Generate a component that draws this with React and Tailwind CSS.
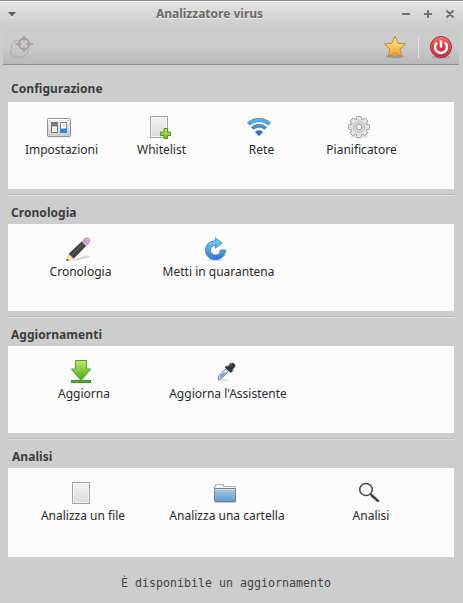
import clsx from 'clsx'

function HuntIcon() {
  return (
    <svg width="24" height="24" viewBox="0 0 24 24" fill="none" stroke="#a9a2a2" strokeWidth=".8">
      <path d="M10 5.500C6 5 3 7.500 2.500 11c-.4 2.500.4 5-.5 6.500L.5 17l2.500 3c1 1.800 2 2.500 4 2.200l8-1.200c3-1.500 4.500-4 4.300-7" />
      <path d="M4 23.500h15" stroke="#b9b6b6" />
      <circle cx="15" cy="9" r="5.300" strokeWidth="1.700" stroke="#a29a9a" />
      <path d="M15 .5v6M15 11.500v6M6.500 9H13M17 9h7" strokeWidth="1.300" stroke="#a29a9a" />
    </svg>
  )
}

function StarIcon() {
  return (
    <svg width="24" height="24" viewBox="0 0 24 24">
      <defs>
        <linearGradient id="star" x1="0" y1="0" x2="0" y2="1">
          <stop offset="0" stopColor="#fff0a8" />
          <stop offset="0.5" stopColor="#fdc95a" />
          <stop offset="1" stopColor="#ff9a1c" />
        </linearGradient>
      </defs>
      <ellipse cx="12" cy="21.500" rx="9" ry="1.800" fill="#000" opacity="0.18" />
      <path
        d="M12 1.300l3.100 6.900 7.400.8-5.500 5.100 1.700 7.400L12 18l-6.700 3.500L7 14.100 1.500 9l7.400-.8z"
        fill="url(#star)"
        stroke="#c48730"
        strokeLinejoin="round"
      />
    </svg>
  )
}

function PowerIcon() {
  return (
    <svg width="24" height="24" viewBox="0 0 24 24">
      <defs>
        <linearGradient id="power" x1="0" y1="0" x2="0" y2="1">
          <stop offset="0" stopColor="#ee756a" />
          <stop offset="0.45" stopColor="#d93a42" />
          <stop offset="1" stopColor="#b3203c" />
        </linearGradient>
      </defs>
      <ellipse cx="12" cy="22" rx="9" ry="1.800" fill="#000" opacity="0.15" />
      <circle cx="12" cy="12" r="10.500" fill="url(#power)" stroke="#a52239" />
      <circle cx="12" cy="12" r="9.500" fill="none" stroke="#f58a83" opacity="0.4" />
      <path
        d="M8 7.600a6 6 0 1 0 8 0M12 5.500v7"
        fill="none"
        stroke="#fff"
        strokeWidth="2.500"
      />
    </svg>
  )
}

function SettingsIcon() {
  return (
    <svg width="24" height="24" viewBox="0 0 24 24">
      <defs>
        <linearGradient id="plate" x1="0" y1="0" x2="0" y2="1">
          <stop offset="0" stopColor="#f2f2f2" />
          <stop offset="1" stopColor="#cfcfcf" />
        </linearGradient>
      </defs>
      <rect x="1" y="21" width="22" height="1.500" fill="#000" opacity="0.13" />
      <rect x=".5" y="3.500" width="23" height="18" rx="1" fill="url(#plate)" stroke="#929292" />
      <path d="M1.500 4.500h21" stroke="#fff" />
      <path d="M2 5.500h1M21 5.500h1M2 19.500h1M21 19.500h1" stroke="#aaa" />
      <rect x="4.500" y="7.500" width="6" height="10" fill="#fff" stroke="#777" />
      <rect x="4" y="7" width="7" height="4.500" fill="#777" />
      <rect x="6" y="13" width="3" height="3" fill="#e8e8e8" />
      <rect x="13.500" y="7.500" width="6" height="10" fill="#fff" stroke="#858585" />
      <rect x="15" y="9" width="3" height="3" fill="#e8e8e8" />
      <rect x="13" y="13.500" width="7" height="4.500" fill="#3b83d0" />
    </svg>
  )
}

function FileIcon({ add }) {
  return (
    <svg width="24" height="24" viewBox="0 0 24 24">
      <defs>
        <linearGradient id="page" x1="0" y1="0" x2="0" y2="1">
          <stop offset="0" stopColor="#f3f3f3" />
          <stop offset="1" stopColor="#dcdcdc" />
        </linearGradient>
        <linearGradient id="plus" x1="0" y1="0" x2="0" y2="1">
          <stop offset="0" stopColor="#b4e75d" />
          <stop offset="1" stopColor="#70c32c" />
        </linearGradient>
      </defs>
      <rect x="3.500" y="1.500" width="17" height="21" fill="url(#page)" stroke="#a3a3a3" />
      <rect x="4.500" y="2.500" width="15" height="19" fill="none" stroke="#fafafa" opacity="0.8" />
      {add ? (
        <path
          d="M17 13.500h3.500v3.500h3v3.500h-3v3H17v-3h-3.500V17H17z"
          fill="url(#plus)"
          stroke="#4f9822"
        />
      ) : null}
    </svg>
  )
}

function WifiIcon() {
  return (
    <svg width="24" height="24" viewBox="0 0 24 24">
      <defs>
        <linearGradient id="wifi" x1="0" y1="3" x2="0" y2="21" gradientUnits="userSpaceOnUse">
          <stop offset="0" stopColor="#60bdeb" />
          <stop offset="1" stopColor="#2e63b8" />
        </linearGradient>
      </defs>
      <g fill="url(#wifi)" stroke="#2870a9" strokeWidth=".6" strokeLinejoin="round">
        <path d="M.5 7.800C6.500 1.800 17.500 1.800 23.500 7.800l-2.200 2.300c-5-4.600-13.600-4.600-18.600 0z" />
        <path d="M4.400 12.300c4.200-4 11-4 15.200 0l-2.200 2.100c-3.100-2.700-7.700-2.700-10.800 0z" />
        <path d="M8.300 17c2-1.900 5.400-1.900 7.400 0L12 20.700z" />
      </g>
    </svg>
  )
}

function GearIcon() {
  const teeth = [0, 45, 90, 135, 180, 225, 270, 315]

  return (
    <svg width="24" height="24" viewBox="0 0 24 24">
      <ellipse cx="12" cy="22" rx="9" ry="1.500" fill="#000" opacity="0.08" />
      <g fill="#e5e5e5" stroke="#a0a0a0">
        {teeth.map((angle) => (
          <rect
            key={angle}
            x="9.500"
            y="1.500"
            width="5"
            height="5"
            rx="1"
            transform={`rotate(${angle} 12 12)`}
          />
        ))}
        <circle cx="12" cy="12" r="8.300" />
      </g>
      {teeth.map((angle) => (
        <rect
          key={angle}
          x="10"
          y="2.200"
          width="4"
          height="4"
          fill="#e5e5e5"
          transform={`rotate(${angle} 12 12)`}
        />
      ))}
      <circle cx="12" cy="12" r="5.800" fill="#d6d6d6" stroke="#c2c2c2" />
      <circle cx="12" cy="12" r="2.800" fill="#fcfcfc" stroke="#a2a2a2" />
    </svg>
  )
}

function PencilIcon() {
  return (
    <svg width="24" height="24" viewBox="0 0 24 24">
      <path d="M3 24l15-5c4-1 7-.3 5 1.200L13 23z" fill="#000" opacity="0.14" />
      <path d="M.5 24L3 16.800l4.800 4.500z" fill="#f5e8a8" stroke="#b7a873" strokeWidth=".5" />
      <path d="M.2 24l.8-2.200 1.500 1.400z" fill="#222" />
      <path d="M3 16.800L16 4.600l4.200 4L7.800 21.300z" fill="#424242" stroke="#2a2a2a" strokeWidth=".5" />
      <path d="M5.500 18L17.500 6.500" stroke="#6c6c6c" />
      <path d="M15.800 4.800l2.700-2.500 4.200 4-2.700 2.700z" fill="#c4c4c4" stroke="#808080" strokeWidth=".5" />
      <path d="M17.700 3C19 .7 21.300.2 23 1.500c1.400 1.400 1.100 3.600-.8 5.200z" fill="#eba9d8" stroke="#9c668b" strokeWidth=".6" />
    </svg>
  )
}

function RestoreIcon() {
  return (
    <svg width="24" height="24" viewBox="0 0 24 24">
      <defs>
        <linearGradient id="restore" x1="0" y1="0" x2="0" y2="1">
          <stop offset="0" stopColor="#82d6f7" />
          <stop offset="1" stopColor="#2f75d0" />
        </linearGradient>
      </defs>
      <ellipse cx="11" cy="23" rx="8" ry="1" fill="#000" opacity="0.12" />
      <path
        d="M11.500.8v3C5.500 3.900 1.500 7.700 1.500 13c0 5.600 4.400 9.700 10 9.700s10-4 10-9.700h-5c-.2 3.200-2 5-5 5-2.800 0-5-2-5-5s2.200-4.500 5-4.500v2.600L18 6z"
        fill="url(#restore)"
        stroke="#2e7fb9"
        strokeWidth=".8"
      />
    </svg>
  )
}

function DownloadIcon() {
  return (
    <svg width="24" height="24" viewBox="0 0 24 24">
      <defs>
        <linearGradient id="download" x1="0" y1="0" x2="0" y2="1">
          <stop offset="0" stopColor="#bcec68" />
          <stop offset="1" stopColor="#49a51c" />
        </linearGradient>
      </defs>
      <path d="M6.500 1.500h11V10h4.200L12 21.500 2.300 10h4.200z" fill="url(#download)" stroke="#559f2e" />
      <rect x="2.500" y="21.500" width="19" height="2" fill="#5db02b" stroke="#438c22" />
    </svg>
  )
}

function DropperIcon() {
  return (
    <svg width="24" height="24" viewBox="0 0 24 24">
      <ellipse cx="10" cy="21.200" rx="5.500" ry="1.200" fill="#000" opacity="0.12" />
      <path d="M5.500 20.700c-.3-2.600.4-4.300 1.800-5.700l5.200-5 2.600 2.600-5.200 5.400c-1.300 1.500-2.500 2.300-4.400 2.700z" fill="#f4f6f8" stroke="#6b6f75" strokeWidth=".9" />
      <path d="M6.500 19.600c0-1.900.7-3 1.700-4l2.100-2h3.300l-4.200 4.300z" fill="#6f9fd8" />
      <path
        d="M12 8.500l1.500-1.400 1.300.8C16 5 18.700 3.300 20.800 4.600c2 1.500 1.200 4.200-1.700 6l.4 1.500-1.500 1.500z"
        fill="#34373a"
        stroke="#222"
        strokeWidth=".6"
      />
      <path d="M16 7.500c1-1.300 2-1.900 3-1.700" fill="none" stroke="#80858a" />
    </svg>
  )
}

function FolderIcon() {
  return (
    <svg width="24" height="24" viewBox="0 0 24 24">
      <defs>
        <linearGradient id="folder" x1="0" y1="0" x2="0" y2="1">
          <stop offset="0" stopColor="#accde6" />
          <stop offset="1" stopColor="#629dce" />
        </linearGradient>
      </defs>
      <path d="M1.500 10V5.500h1v-2h8v2h12V10z" fill="#f5f5f5" stroke="#b2b2b2" />
      <path d="M2 21.500h21" stroke="#000" opacity="0.2" />
      <rect x="1.500" y="7.500" width="21" height="13" rx=".5" fill="url(#folder)" stroke="#6c8598" />
      <path d="M2 8.500h20" stroke="#cde1f0" />
    </svg>
  )
}

function SearchIcon() {
  return (
    <svg width="24" height="24" viewBox="0 0 24 24" fill="none">
      <ellipse cx="9" cy="8.500" rx="6.300" ry="6" stroke="#4b4b4b" strokeWidth="1.600" />
      <path d="M13.300 13l2 1.800" stroke="#444" strokeWidth="2" />
      <path d="M14.500 14.300l7.200 6.200" stroke="#444" strokeWidth="2.500" />
    </svg>
  )
}

const sections = [
  {
    title: 'Configurazione',
    cell: 'w-[100px]',
    panel: 'h-[87px]',
    labelInset: 'pl-[5px]',
    items: [
      { label: 'Impostazioni', icon: <SettingsIcon /> },
      { label: 'Whitelist', icon: <FileIcon add /> },
      { label: 'Rete', icon: <WifiIcon /> },
      { label: 'Pianificatore', icon: <GearIcon /> },
    ],
  },
  {
    title: 'Cronologia',
    cell: 'w-[138px]',
    panel: 'h-[87px]',
    labelInset: 'pl-[5px]',
    items: [
      { label: 'Cronologia', icon: <PencilIcon /> },
      { label: 'Metti in quarantena', icon: <RestoreIcon /> },
    ],
  },
  {
    title: 'Aggiornamenti',
    cell: 'w-[144px]',
    panel: 'h-[87px]',
    labelInset: 'pl-[6px]',
    items: [
      { label: 'Aggiorna', icon: <DownloadIcon /> },
      { label: "Aggiorna l'Assistente", icon: <DropperIcon /> },
    ],
  },
  {
    title: 'Analisi',
    cell: 'w-[144px]',
    panel: 'h-[89px]',
    labelInset: 'pl-[4px]',
    items: [
      { label: 'Analizza un file', icon: <FileIcon /> },
      { label: 'Analizza una cartella', icon: <FolderIcon /> },
      { label: 'Analisi', icon: <SearchIcon /> },
    ],
  },
]

function TitleBar() {
  return (
    <header className="flex h-[25px] items-center justify-between bg-linear-to-b from-[#e4e4e4] to-[#cdcdcd] pr-[7px] pl-[8px] shadow-[inset_0_1px_0_#fafafa]">
      <svg width="60" height="10" viewBox="0 0 60 10">
        <path d="M0 3h8L4 7.500z" fill="#5c5c5c" />
        <path d="M2 7.500l2 1.500 2-1.500" fill="none" stroke="#f4f4f4" />
      </svg>
      <h1 className="pr-[51px] text-[12px] leading-[24px] font-bold text-[#6a6a6a] [text-shadow:0_1px_0_#f0f0f0]">
        Analizzatore virus
      </h1>
      <svg width="54" height="10" viewBox="0 0 54 10" fill="none" stroke="#707070" strokeWidth="2">
        <path d="M0 5h8M22 5h8M26 1v8M44.500 1.500l7 7M51.500 1.500l-7 7" />
      </svg>
    </header>
  )
}

function Toolbar() {
  return (
    <div className="mr-[4px] ml-[3px] flex h-[39px] items-center justify-between border-b border-[#8f8f8f] bg-linear-to-b from-[#cbcbcb] via-[#cbcbcb] to-[#b9b9b9] pt-[4px] pr-[6px] pl-[6px]">
      <HuntIcon />
      <div className="flex items-center">
        <StarIcon />
        <span className="mr-[10px] ml-[11px] h-[21px] w-px bg-[#e2e2e2]" />
        <PowerIcon />
      </div>
    </div>
  )
}

function Section({ section, first }) {
  return (
    <section className="pr-[9px] pl-[8px]">
      {!first ? (
        <div className="mt-[5px] h-[2px] border-t border-b border-t-[#bdbdbd] border-b-[#dedede]" />
      ) : null}
      <h2
        className={clsx(
          'text-[12px] leading-[18px] font-bold tracking-[0.05px] text-[#3c3c3c]',
          first ? 'pt-[15px] pb-[4px]' : 'pt-[8px] pb-[2px]',
          section.title === 'Analisi' ? 'pl-[4px]' : 'pl-[3px]',
        )}
      >
        {section.title}
      </h2>
      <div className={clsx('flex bg-[#fcfcfc] pt-[13px] pl-px', section.panel)}>
        {section.items.map((item) => (
          <div
            key={item.label}
            className={clsx('flex shrink-0 flex-col items-center', section.cell)}
          >
            {item.icon}
            <span
              className={clsx(
                'pt-[2px] text-[12px] leading-[18px] whitespace-nowrap text-[#2b2b2b]',
                section.labelInset,
              )}
            >
              {item.label}
            </span>
          </div>
        ))}
      </div>
    </section>
  )
}

export default function App() {
  return (
    <main className="flex h-[603px] w-[463px] flex-col overflow-hidden bg-[#cdcdcd] font-['Noto_Sans',sans-serif]">
      <div className="border-t border-[#8c8c8c]">
        <TitleBar />
        <Toolbar />
      </div>
      {sections.map((section, index) => (
        <Section key={section.title} section={section} first={index === 0} />
      ))}
      <p className="pt-[17px] pr-[11px] text-center font-['DejaVu_Sans_Mono',monospace] text-[11.630px] leading-[18px] text-[#444]">
        È disponibile un aggiornamento
      </p>
    </main>
  )
}
